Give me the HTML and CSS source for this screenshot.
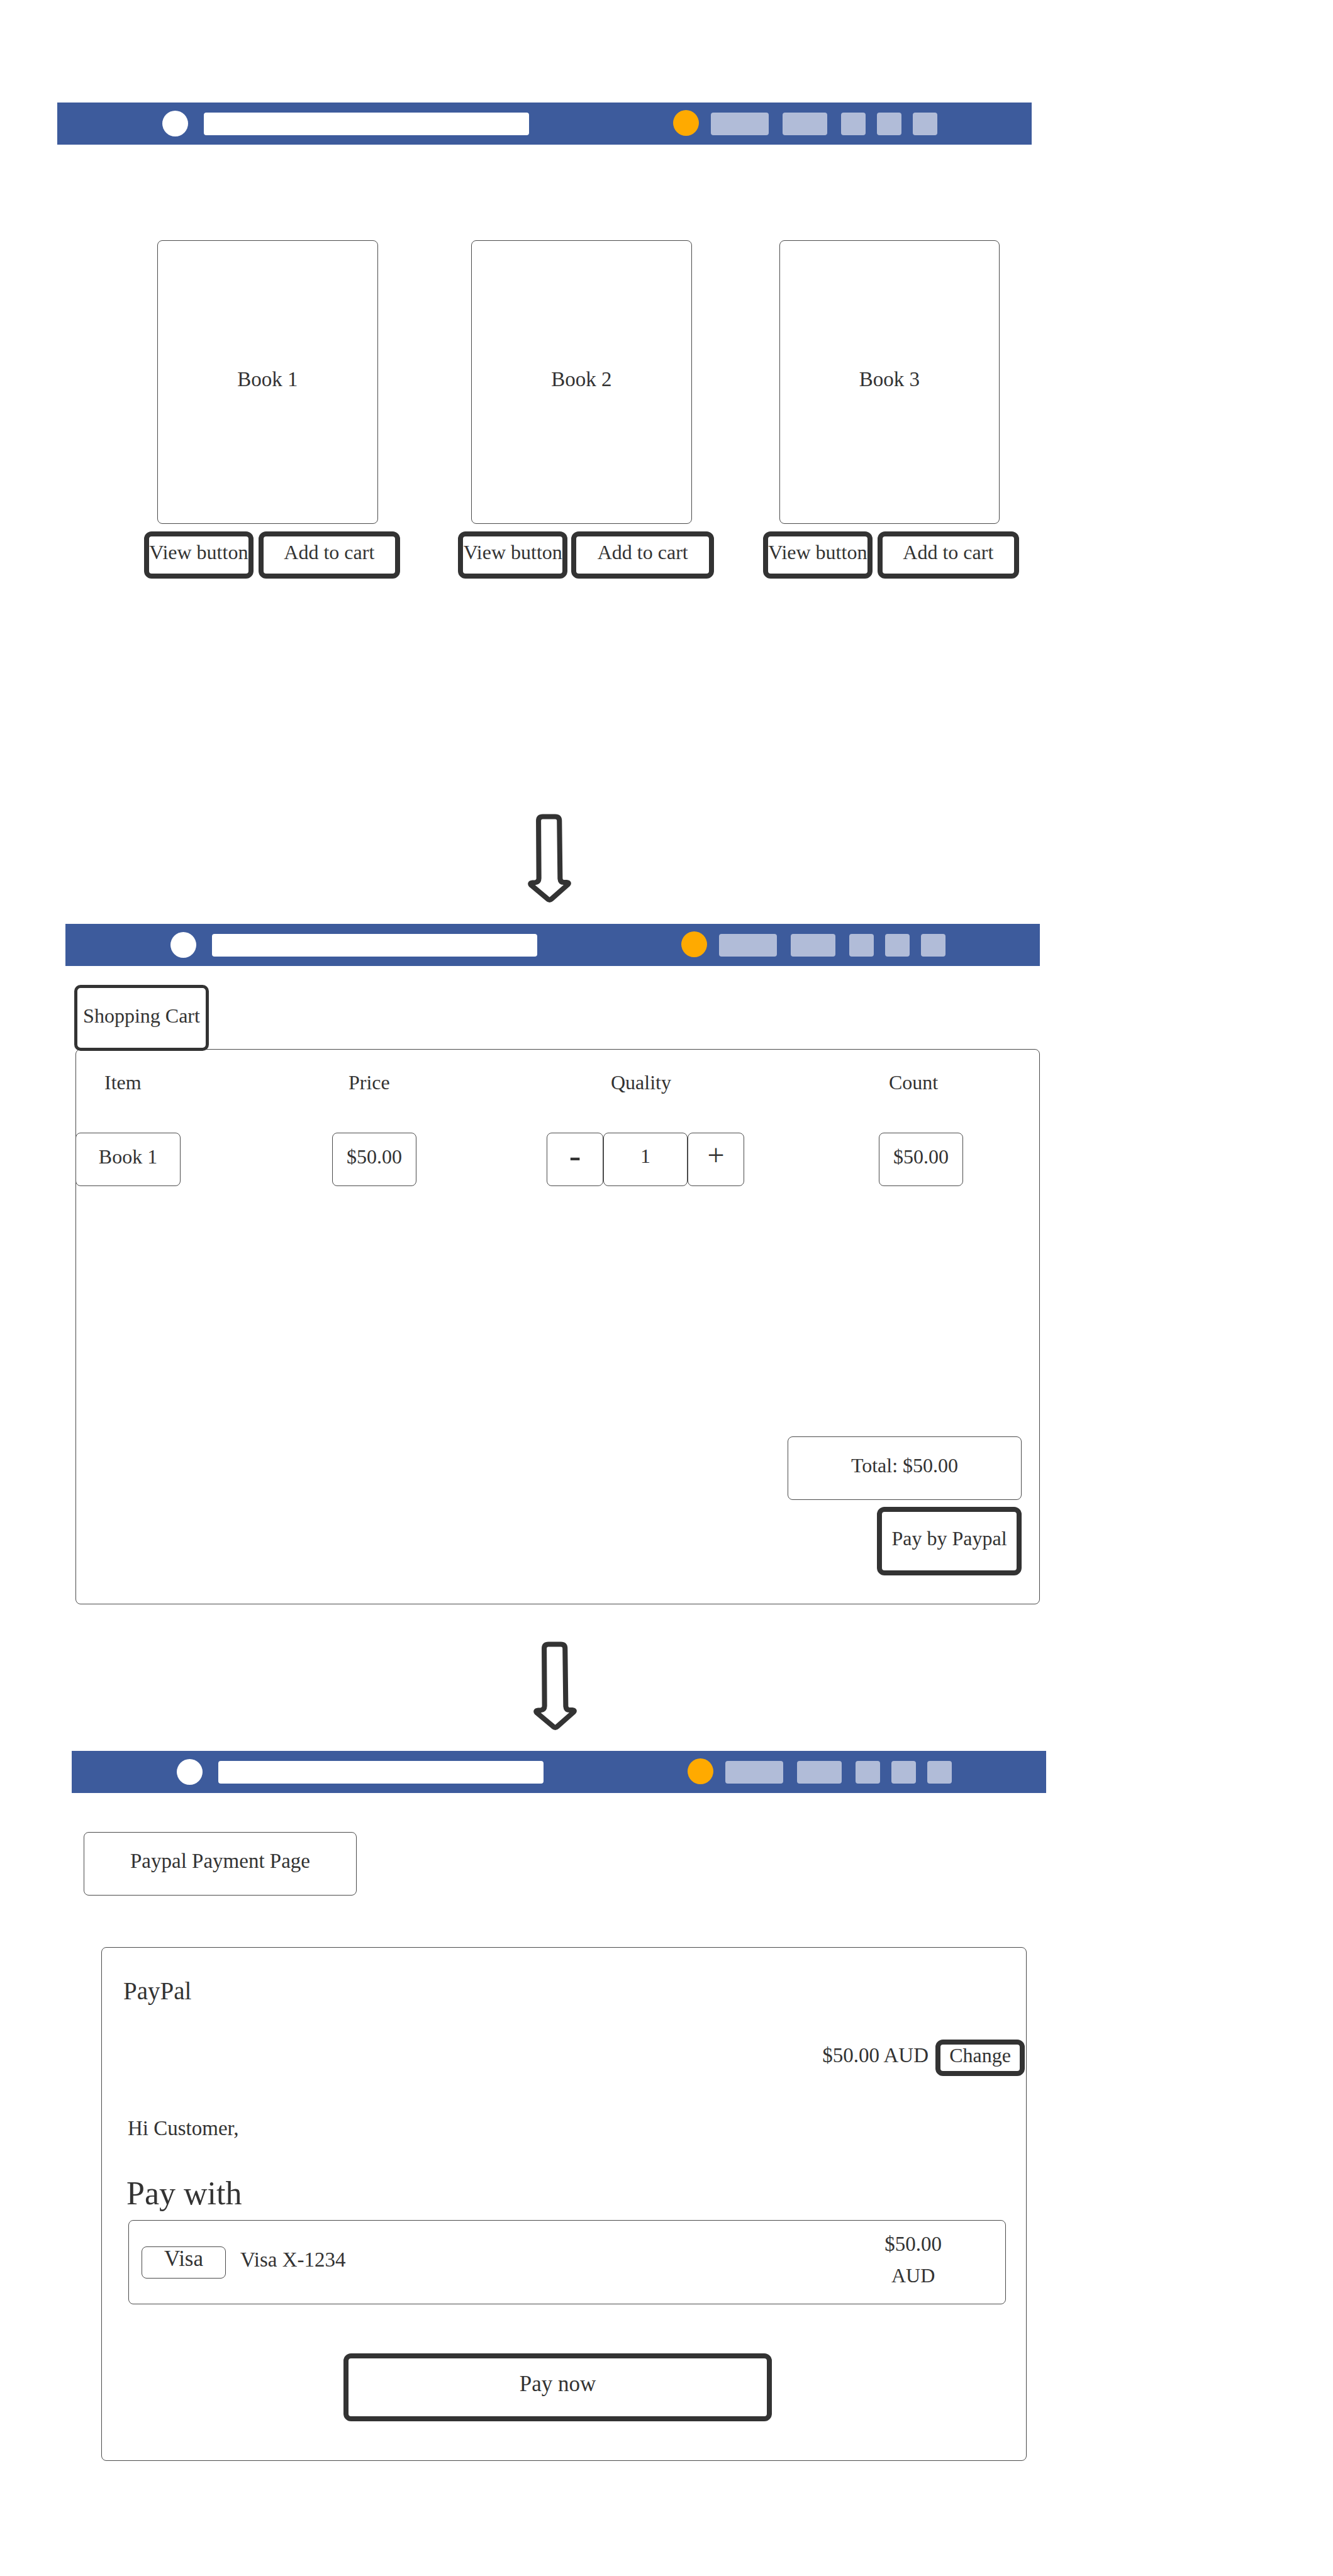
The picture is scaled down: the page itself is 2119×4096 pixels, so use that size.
FILE: index.html
```html
<!DOCTYPE html>
<html lang="en">
<head>
<meta charset="utf-8">
<title>Book store checkout flow</title>
<link rel="stylesheet" href="styles.css">
</head>
<body>
<main class="page">

  <section class="screen screen-store">
    <header class="topbar">
      <a class="logo" href="#" aria-label="Home"></a>
      <input class="search" type="search" aria-label="Search">
      <nav class="menu">
        <a class="avatar" href="#" aria-label="Profile"></a>
        <a class="tab tab-large" href="#" aria-label="Books"></a>
        <a class="tab tab-medium" href="#" aria-label="Orders"></a>
        <span class="icons">
          <a class="tab tab-small" href="#" aria-label="Messages"></a>
          <a class="tab tab-small" href="#" aria-label="Cart"></a>
          <a class="tab tab-small" href="#" aria-label="Settings"></a>
        </span>
      </nav>
    </header>
    <div class="products">
      <article class="product">
        <div class="cover">Book 1</div>
        <div class="actions">
          <button class="btn btn-view" type="button">View button</button>
          <button class="btn btn-add" type="button">Add to cart</button>
        </div>
      </article>
      <article class="product">
        <div class="cover">Book 2</div>
        <div class="actions actions-tight">
          <button class="btn btn-view" type="button">View button</button>
          <button class="btn btn-add" type="button">Add to cart</button>
        </div>
      </article>
      <article class="product product-last">
        <div class="cover">Book 3</div>
        <div class="actions">
          <button class="btn btn-view" type="button">View button</button>
          <button class="btn btn-add" type="button">Add to cart</button>
        </div>
      </article>
    </div>
  </section>

  <svg class="arrow arrow-first" viewBox="145 75 247 506" aria-hidden="true">
    <path d="M206 115 Q206 91 230 91 H301 Q325 91 325 115 L329 445 Q331 467 352 466 H366 Q384 468 373 479 L281 560 Q269 571 257 560 L164 482 Q153 470 172 468 L184 468 Q208 466 208 443 Z"/>
  </svg>

  <section class="screen screen-cart">
    <header class="topbar">
      <a class="logo" href="#" aria-label="Home"></a>
      <input class="search" type="search" aria-label="Search">
      <nav class="menu">
        <a class="avatar" href="#" aria-label="Profile"></a>
        <a class="tab tab-large" href="#" aria-label="Books"></a>
        <a class="tab tab-medium" href="#" aria-label="Orders"></a>
        <span class="icons">
          <a class="tab tab-small" href="#" aria-label="Messages"></a>
          <a class="tab tab-small" href="#" aria-label="Cart"></a>
          <a class="tab tab-small" href="#" aria-label="Settings"></a>
        </span>
      </nav>
    </header>
    <h2 class="cart-title">Shopping Cart</h2>
    <div class="cart">
      <table class="items">
        <thead>
          <tr>
            <th class="col-item" scope="col">Item</th>
            <th class="col-price" scope="col">Price</th>
            <th class="col-quality" scope="col">Quality</th>
            <th class="col-count" scope="col">Count</th>
          </tr>
        </thead>
        <tbody>
          <tr>
            <td><div class="box box-name">Book 1</div></td>
            <td><div class="box">$50.00</div></td>
            <td>
              <div class="stepper">
                <button class="box step step-minus" type="button">-</button>
                <input class="box" type="text" value="1" aria-label="Quality">
                <button class="box step" type="button">+</button>
              </div>
            </td>
            <td><div class="box">$50.00</div></td>
          </tr>
        </tbody>
      </table>
      <div class="summary">
        <div class="total">Total: $50.00</div>
        <button class="btn btn-paypal" type="button">Pay by Paypal</button>
      </div>
    </div>
  </section>

  <svg class="arrow arrow-second" viewBox="145 75 247 506" aria-hidden="true">
    <path d="M206 115 Q206 91 230 91 H301 Q325 91 325 115 L329 445 Q331 467 352 466 H366 Q384 468 373 479 L281 560 Q269 571 257 560 L164 482 Q153 470 172 468 L184 468 Q208 466 208 443 Z"/>
  </svg>

  <section class="screen screen-payment">
    <header class="topbar">
      <a class="logo" href="#" aria-label="Home"></a>
      <input class="search" type="search" aria-label="Search">
      <nav class="menu">
        <a class="avatar" href="#" aria-label="Profile"></a>
        <a class="tab tab-large" href="#" aria-label="Books"></a>
        <a class="tab tab-medium" href="#" aria-label="Orders"></a>
        <span class="icons">
          <a class="tab tab-small" href="#" aria-label="Messages"></a>
          <a class="tab tab-small" href="#" aria-label="Cart"></a>
          <a class="tab tab-small" href="#" aria-label="Settings"></a>
        </span>
      </nav>
    </header>
    <h2 class="payment-title">Paypal Payment Page</h2>
    <div class="payment">
      <h3 class="brand">PayPal</h3>
      <div class="amount">
        <span class="amount-value">$50.00 AUD</span>
        <button class="btn btn-change" type="button">Change</button>
      </div>
      <p class="greeting">Hi Customer,</p>
      <h3 class="pay-with">Pay with</h3>
      <div class="method">
        <span class="card-brand">Visa</span>
        <span class="card-number">Visa X-1234</span>
        <div class="card-amount">
          <span>$50.00</span>
          <span class="currency">AUD</span>
        </div>
      </div>
      <button class="btn btn-pay" type="button">Pay now</button>
    </div>
  </section>

</main>
</body>
</html>
```

FILE: styles.css
```css
:root {
  --ink: #333333;
  --line: #4a4a4a;
  --bar: #3d5b9c;
  --tab: #b1bcd8;
  --gold: #ffaa00;
}

* {
  box-sizing: border-box;
}

body {
  margin: 0;
  background: #ffffff;
  color: var(--ink);
  font-family: "Liberation Serif", "Times New Roman", serif;
  font-size: 32px;
  line-height: 40px;
}

h2,
h3,
p {
  margin: 0;
  font-weight: normal;
}

button,
input {
  margin: 0;
  color: inherit;
  font: inherit;
}

.page {
  display: flex;
  flex-direction: column;
  padding: 163px 0 183px;
}

.screen-store {
  margin: 0 479px 0 91px;
}

.screen-cart {
  margin: 0 466px 0 104px;
}

.screen-payment {
  margin: 0 456px 0 114px;
}

/* Top bar */

.topbar {
  display: flex;
  align-items: center;
  height: 67px;
  padding: 0 150px 0 167px;
  background: var(--bar);
}

.logo,
.avatar {
  flex: none;
  width: 41px;
  height: 41px;
  border-radius: 50%;
  background: #ffffff;
}

.search {
  flex: 1;
  min-width: 0;
  height: 36px;
  margin: 0 229px 0 25px;
  padding: 0 12px;
  border: 0;
  border-radius: 4px;
  background: #ffffff;
  appearance: none;
}

.menu {
  display: flex;
  align-items: center;
  gap: 22px;
}

.avatar {
  margin: 0 -3px 3px 0;
  background: var(--gold);
}

.icons {
  display: flex;
  gap: 18px;
}

.tab {
  height: 36px;
  border-radius: 4px;
  background: var(--tab);
}

.tab-large {
  width: 92px;
}

.tab-medium {
  width: 71px;
}

.tab-small {
  width: 39px;
}

/* Shared controls */

.btn {
  padding: 0 0 10px;
  border: 8px solid var(--ink);
  border-radius: 12px;
  background: #ffffff;
  text-align: center;
  white-space: nowrap;
}

.box,
.total,
.cover,
.payment-title,
.card-brand {
  display: flex;
  align-items: center;
  justify-content: center;
  padding: 0 0 10px;
  border: 1px solid var(--line);
  border-radius: 8px;
  background: #ffffff;
}

/* Store */

.products {
  display: flex;
  gap: 92px;
  margin-top: 152px;
  padding: 0 20px 0 138px;
}

.product {
  flex: 1;
}

.product-last {
  margin-left: -14px;
}

.cover {
  height: 451px;
  margin: 0 35px 0 21px;
  font-size: 33px;
}

.product-last .cover {
  margin: 0 31px 0 26px;
}

.actions {
  display: flex;
  gap: 8px;
  margin-top: 12px;
}

.actions-tight {
  gap: 6px;
}

.actions .btn {
  height: 75px;
}

.btn-view {
  flex: 158 1 0;
  min-width: 0;
}

.btn-add {
  flex: 210 1 0;
}

/* Flow arrows */

.arrow {
  width: 69px;
  height: 141px;
  fill: #ffffff;
  stroke: var(--ink);
  stroke-width: 29;
  stroke-linejoin: round;
}

.arrow-first {
  margin: 374px 0 34px 839px;
}

.arrow-second {
  margin: 59px 0 33px 848px;
}

/* Cart */

.cart-title {
  display: flex;
  align-items: center;
  justify-content: center;
  position: relative;
  width: 214px;
  height: 105px;
  margin: 30px 0 -3px 14px;
  padding-bottom: 8px;
  border: 5px solid var(--ink);
  border-radius: 10px;
  background: #ffffff;
  font-size: 32px;
}

.cart {
  display: flex;
  flex-direction: column;
  min-height: 883px;
  margin-left: 16px;
  padding: 32px 28px 45px 0;
  border: 1px solid var(--line);
  border-radius: 8px;
}

.items {
  table-layout: fixed;
  width: calc(100% + 29px);
  margin: 0 -28px 0 -1px;
  border-collapse: collapse;
}

.items th,
.items td {
  padding: 0;
  font-weight: normal;
  text-align: left;
}

.items th {
  padding-bottom: 60px;
}

.items .col-item {
  width: 408px;
  padding-left: 46px;
}

.items .col-price {
  width: 341px;
  padding-left: 26px;
}

.items .col-quality {
  width: 528px;
  padding-left: 102px;
}

.items .col-count {
  padding-left: 16px;
}

.box {
  width: 134px;
  height: 85px;
  text-align: center;
}

.box-name {
  width: 167px;
}

.stepper {
  display: flex;
}

.step {
  width: 90px;
  padding-bottom: 14px;
  font-size: 48px;
}

.step-minus {
  font-size: 56px;
}

.summary {
  display: flex;
  flex-direction: column;
  align-items: flex-end;
  gap: 11px;
  margin-top: auto;
}

.total {
  width: 372px;
  height: 101px;
}

.btn-paypal {
  width: 230px;
  height: 109px;
}

/* Payment */

.payment-title {
  width: 434px;
  height: 101px;
  margin: 62px 0 0 19px;
  font-size: 33px;
}

.payment {
  display: flex;
  flex-direction: column;
  margin: 82px 31px 0 47px;
  padding: 45px 0 62px;
  border: 1px solid var(--line);
  border-radius: 8px;
  font-size: 33px;
}

.brand {
  padding-left: 34px;
  font-size: 39px;
  line-height: 48px;
}

.amount {
  display: flex;
  align-items: center;
  justify-content: flex-end;
  gap: 11px;
  margin-top: 53px;
  padding-right: 2px;
}

.amount-value {
  padding-bottom: 8px;
}

.btn-change {
  width: 142px;
  height: 58px;
  padding-bottom: 8px;
  font-size: 32px;
  line-height: 34px;
}

.greeting {
  margin-top: 63px;
  padding-left: 41px;
}

.pay-with {
  margin-top: 54px;
  padding-left: 39px;
  font-size: 52px;
  line-height: 60px;
}

.method {
  display: flex;
  align-items: center;
  height: 134px;
  margin: 12px 32px 0 42px;
  padding: 0 101px 0 20px;
  border: 1px solid var(--line);
  border-radius: 8px;
}

.card-brand {
  width: 134px;
  height: 51px;
  font-size: 35px;
}

.card-number {
  margin-left: 23px;
  padding-bottom: 8px;
}

.card-amount {
  display: flex;
  flex-direction: column;
  align-items: center;
  margin-left: auto;
  padding-bottom: 8px;
  line-height: 50px;
}

.currency {
  font-size: 32px;
}

.btn-pay {
  height: 108px;
  margin: 78px 404px 0 384px;
  font-size: 35px;
}
```
